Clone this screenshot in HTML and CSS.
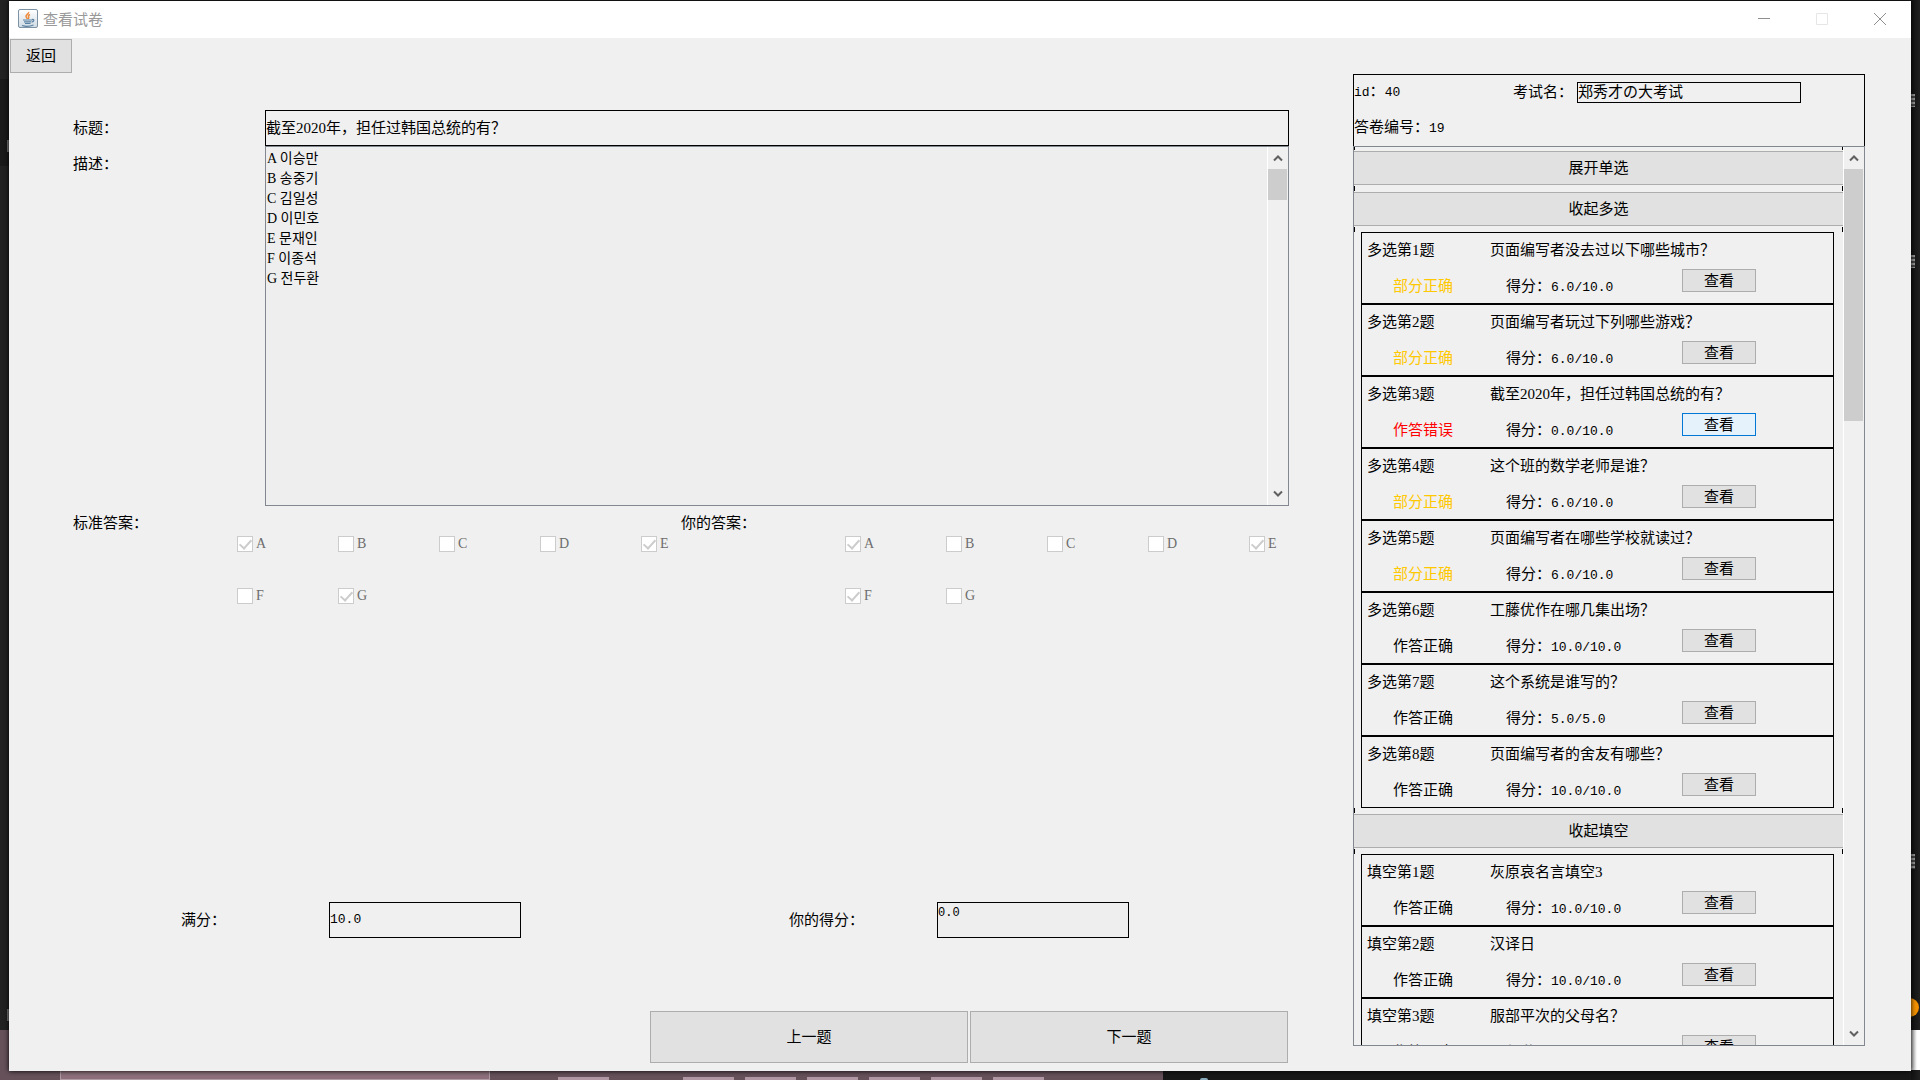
FILE: index.html
```html
<!DOCTYPE html>
<html lang="zh-CN">
<head>
<meta charset="utf-8">
<title>查看试卷</title>
<link rel="stylesheet" href="styles.css">
</head>
<body>
<div class="desktop" aria-hidden="true">
  <div class="side-left"><i class="mark mark-a"></i><i class="mark mark-b"></i></div>
  <div class="side-right"><i class="glyph glyph-a"></i><i class="glyph glyph-b"></i><i class="glyph glyph-c"></i><i class="dot"></i><i class="sheet"></i></div>
  <div class="taskbar">
    <span class="search"></span>
    <div class="tasks"><i></i><i></i><i></i><i></i><i></i><i></i><i></i></div>
    <span class="tray"></span>
  </div>
</div>
<div class="window">
  <header class="titlebar">
    <svg class="java" viewBox="0 0 20 20" width="20" height="20" aria-hidden="true">
      <defs><linearGradient id="tile" x1="0" y1="0" x2="0" y2="1"><stop offset="0" stop-color="#fff"/><stop offset="1" stop-color="#cfdbe4"/></linearGradient></defs>
      <rect x=".5" y=".5" width="19" height="18" rx="1.5" fill="url(#tile)" stroke="#7d92a5"/>
      <path d="M10.5 3c1 1.5-3 2.700-2.500 4.500.2.900 1.300 1.300 1.200 2.500M12 5.500c-1.600.8-2 1.500-1.300 2.500.4.800 0 1.300-.6 2" fill="none" stroke="#ee8a3c" stroke-width="1.500"/>
      <path d="M5 11h9.500M6 12.800h7M7 14.500h5.500M4 16.500c3 1 8.500.8 11.500-.5M14 10.500c2.500-.6 2.500 2-.5 2.700" fill="none" stroke="#5b82a3" stroke-width="1.200"/>
    </svg>
    <h1 class="caption">查看试卷</h1>
    <div class="controls">
      <button type="button" aria-label="最小化"><svg width="12" height="12" viewBox="0 0 12 12"><path d="M0 5.500h12" stroke="#8f8f8f"/></svg></button>
      <button type="button" aria-label="最大化" disabled><svg width="12" height="12" viewBox="0 0 12 12"><path d="M.5.500h11v11H.5z" fill="none" stroke="#e6e6e6"/></svg></button>
      <button type="button" aria-label="关闭"><svg width="12" height="12" viewBox="0 0 12 12"><path d="M0 0l12 12M12 0L0 12" stroke="#8f8f8f"/></svg></button>
    </div>
  </header>
  <div class="toolbar"><button type="button" class="btn back">返回</button></div>
  <div class="content">
    <main class="detail">
      <div class="question">
        <label for="title">标题：</label>
        <input id="title" class="field" type="text" readonly value="截至2020年，担任过韩国总统的有？">
        <label for="desc">描述：</label>
        <div class="pane desc">
          <textarea id="desc" readonly>A 이승만
B 송중기
C 김일성
D 이민호
E 문재인
F 이종석
G 전두환</textarea>
          <div class="scrollbar"><svg class="arrow" viewBox="0 0 10 8"><path d="M1 6.500l4-4 4 4"/></svg><div class="track"><div class="thumb" style="height:10%"></div></div><svg class="arrow" viewBox="0 0 10 8"><path d="M1 1.500l4 4 4-4"/></svg></div>
        </div>
      </div>
      <div class="halves answers">
        <fieldset>
          <legend>标准答案：</legend>
          <div class="options">
            <label><input type="checkbox" checked disabled>A</label>
            <label><input type="checkbox" disabled>B</label>
            <label><input type="checkbox" disabled>C</label>
            <label><input type="checkbox" disabled>D</label>
            <label><input type="checkbox" checked disabled>E</label>
            <label><input type="checkbox" disabled>F</label>
            <label><input type="checkbox" checked disabled>G</label>
          </div>
        </fieldset>
        <fieldset>
          <legend>你的答案：</legend>
          <div class="options">
            <label><input type="checkbox" checked disabled>A</label>
            <label><input type="checkbox" disabled>B</label>
            <label><input type="checkbox" disabled>C</label>
            <label><input type="checkbox" disabled>D</label>
            <label><input type="checkbox" checked disabled>E</label>
            <label><input type="checkbox" checked disabled>F</label>
            <label><input type="checkbox" disabled>G</label>
          </div>
        </fieldset>
      </div>
      <div class="halves scores">
        <div class="score"><label for="full">满分：</label><input id="full" class="field mono" type="text" readonly value="10.0"></div>
        <div class="score"><label for="own">你的得分：</label><textarea id="own" class="field own" readonly>0.0</textarea></div>
      </div>
      <div class="nav"><button type="button" class="btn">上一题</button><button type="button" class="btn">下一题</button></div>
    </main>
    <aside class="side">
      <div class="info">
        <div class="info-row"><span class="exam-id"><span class="mono">id</span>：<span class="mono">40</span></span><label for="exam">考试名：</label><input id="exam" class="field exam" type="text" readonly value="郑秀才の大考试"></div>
        <div class="info-row"><span>答卷编号：<span class="mono">19</span></span></div>
      </div>
      <div class="pane list">
        <div class="items">
          <div class="tick"></div>
          <button type="button" class="btn group">展开单选</button>
          <div class="tick"></div>
          <button type="button" class="btn group">收起多选</button>
          <div class="tick"></div>
          <section class="cards">
            <article class="card"><span>多选第1题</span><span class="stem">页面编写者没去过以下哪些城市？</span><span class="status partial">部分正确</span><span class="points">得分：<span class="mono">6.0/10.0</span></span><button type="button" class="btn view">查看</button></article>
            <article class="card"><span>多选第2题</span><span class="stem">页面编写者玩过下列哪些游戏？</span><span class="status partial">部分正确</span><span class="points">得分：<span class="mono">6.0/10.0</span></span><button type="button" class="btn view">查看</button></article>
            <article class="card"><span>多选第3题</span><span class="stem">截至2020年，担任过韩国总统的有？</span><span class="status wrong">作答错误</span><span class="points">得分：<span class="mono">0.0/10.0</span></span><button type="button" class="btn view active">查看</button></article>
            <article class="card"><span>多选第4题</span><span class="stem">这个班的数学老师是谁？</span><span class="status partial">部分正确</span><span class="points">得分：<span class="mono">6.0/10.0</span></span><button type="button" class="btn view">查看</button></article>
            <article class="card"><span>多选第5题</span><span class="stem">页面编写者在哪些学校就读过？</span><span class="status partial">部分正确</span><span class="points">得分：<span class="mono">6.0/10.0</span></span><button type="button" class="btn view">查看</button></article>
            <article class="card"><span>多选第6题</span><span class="stem">工藤优作在哪几集出场？</span><span class="status">作答正确</span><span class="points">得分：<span class="mono">10.0/10.0</span></span><button type="button" class="btn view">查看</button></article>
            <article class="card"><span>多选第7题</span><span class="stem">这个系统是谁写的？</span><span class="status">作答正确</span><span class="points">得分：<span class="mono">5.0/5.0</span></span><button type="button" class="btn view">查看</button></article>
            <article class="card"><span>多选第8题</span><span class="stem">页面编写者的舍友有哪些？</span><span class="status">作答正确</span><span class="points">得分：<span class="mono">10.0/10.0</span></span><button type="button" class="btn view">查看</button></article>
          </section>
          <div class="tick"></div>
          <button type="button" class="btn group">收起填空</button>
          <div class="tick"></div>
          <section class="cards">
            <article class="card"><span>填空第1题</span><span class="stem">灰原哀名言填空3</span><span class="status">作答正确</span><span class="points">得分：<span class="mono">10.0/10.0</span></span><button type="button" class="btn view">查看</button></article>
            <article class="card"><span>填空第2题</span><span class="stem">汉译日</span><span class="status">作答正确</span><span class="points">得分：<span class="mono">10.0/10.0</span></span><button type="button" class="btn view">查看</button></article>
            <article class="card"><span>填空第3题</span><span class="stem">服部平次的父母名？</span><span class="status">作答正确</span><span class="points">得分：<span class="mono">10.0/10.0</span></span><button type="button" class="btn view">查看</button></article>
          </section>
        </div>
        <div class="scrollbar"><svg class="arrow" viewBox="0 0 10 8"><path d="M1 6.500l4-4 4 4"/></svg><div class="track"><div class="thumb" style="height:29.5%"></div></div><svg class="arrow" viewBox="0 0 10 8"><path d="M1 1.500l4 4 4-4"/></svg></div>
      </div>
    </aside>
  </div>
</div>
</body>
</html>
```
FILE: styles.css
```css
* { box-sizing: border-box; }

body {
  margin: 0;
  height: 100vh;
  min-height: 800px;
  padding: 1px 9px 9px;
  overflow: hidden;
  background: #1e1e1e;
  color: #000;
  font: 15px/20px "Liberation Serif", "Noto Sans CJK SC", "Noto Sans CJK KR", serif;
}

button, input, textarea { font: inherit; color: inherit; margin: 0; border-radius: 0; }

/* Desktop behind the window */
.desktop { position: absolute; inset: 0; overflow: hidden; }
.side-left { position: absolute; left: 0; top: 0; bottom: 50px; width: 9px; background: linear-gradient(#222 0 79px, #1a1a1a 79px 166px, #222 166px); }
.mark { position: absolute; right: 0; width: 2px; height: 12px; background: #777; }
.mark-a { top: 140px; }
.mark-b { bottom: 9px; }
.side-right { position: absolute; right: 0; top: 0; bottom: 0; width: 9px; background: linear-gradient(90deg, #111, #202020); }
.glyph { position: absolute; left: 0; width: 4px; height: 13px; background: repeating-linear-gradient(#999 0 2px, #444 2px 4px); }
.glyph-a { top: 94px; }
.glyph-b { top: 255px; }
.glyph-c { top: 854px; height: 15px; }
.dot { position: absolute; right: 1px; bottom: 63px; width: 19px; height: 19px; border-radius: 50%; background: #f29100; }
.sheet { position: absolute; inset: auto 0 10px 0; height: 40px; background: linear-gradient(90deg, #aaa, #fff 6px); }
.taskbar { position: absolute; left: 0; right: 9px; bottom: 0; height: 50px; display: flex; align-items: flex-end; background: linear-gradient(90deg, #66515b 0 1163px, #181818 1163px); }
.search { flex: none; width: 430px; height: 100%; margin-left: 60px; background: #8d707b; border: 1px solid #b09aa3; }
.tasks { display: flex; gap: 11px; margin-left: 68px; }
.tasks i { width: 51px; height: 3px; background: #b197a3; }
.tasks i:first-child { margin-right: 63px; }
.tray { width: 8px; height: 2px; margin-left: 156px; border-radius: 4px 4px 0 0; background: #8ab; }

/* Window */
.window { position: relative; height: 100%; display: flex; flex-direction: column; background: #f0f0f0; box-shadow: 0 0 5px #000; }
.titlebar { flex: none; height: 37px; display: flex; align-items: center; padding: 0 2px 2px 9px; background: #fff; color: #999; }
.caption { margin: 0 0 0 5px; font: 15px/20px "Noto Sans CJK SC", sans-serif; }
.controls { display: flex; margin-left: auto; }
.controls button { width: 58px; height: 34px; display: flex; align-items: center; justify-content: center; padding: 0; border: 0; background: none; }
.toolbar { flex: none; padding: 1px; height: 36px; }
.btn { padding: 0; border: 1px solid #adadad; background: #e1e1e1; text-align: center; }
.back { width: 62px; height: 34px; }
.content { flex: 1; min-height: 0; display: grid; grid-template-columns: minmax(0, 1fr) 512px; gap: 64px; padding-right: 46px; }

/* Question detail */
.detail { display: flex; flex-direction: column; padding: 36px 0 8px 64px; }
.question { display: grid; grid-template-columns: 192px 1fr; grid-template-rows: 36px 360px; line-height: 36px; }
.field { border: 1px solid #000; padding: 0; background: #f0f0f0; outline: 0; resize: none; min-width: 0; }
.mono { font-family: "Liberation Mono", monospace; font-size: 13px; }
.pane { display: flex; min-height: 0; border: 1px solid #828790; }
.desc { background: #eee; }
.desc textarea { flex: 1; padding: 2px 1px; border: 0; outline: 0; resize: none; overflow: hidden; background: none; font: 14px/20px "Liberation Serif", "Noto Sans CJK KR", serif; }
.scrollbar { flex: none; width: 21px; display: flex; flex-direction: column; border-left: 1px solid #fff; border-right: 1px solid #f0f0f0; background: #f0f0f0; }
.arrow { flex: none; width: 10px; height: 8px; margin: 7px auto; fill: none; stroke: #606060; stroke-width: 2; }
.track { flex: 1; }
.thumb { background: #cdcdcd; }
.halves { display: grid; grid-template-columns: 1fr 1fr; }
.answers { margin-top: 7px; }
fieldset { margin: 0; padding: 0; border: 0; min-width: 0; }
legend { padding: 0; line-height: 20px; }
.options { display: grid; grid-template-columns: repeat(5, 101px); row-gap: 32px; margin: 1px 0 0 164px; width: 444px; }
.options label { display: flex; align-items: center; gap: 3px; height: 20px; color: #6d6d6d; font-size: 14px; }
.options input { appearance: none; width: 16px; height: 16px; border: 1px solid #ccc; background: #fff; display: grid; place-items: center; }
.options input:checked::before { content: ""; width: 5px; height: 10px; margin-bottom: 3px; border: solid #ccc; border-width: 0 2px 2px 0; transform: rotate(42deg); }
.scores { margin-top: auto; }
.score { display: grid; grid-template-columns: 148px 192px; padding-left: 108px; line-height: 36px; }
.score .field { height: 36px; }
.own { overflow: hidden; background: #eee; font: 12px/20px "Liberation Mono", monospace; }
.nav { display: flex; gap: 2px; justify-content: flex-end; margin-top: 73px; padding-right: 1px; }
.nav .btn { width: 318px; height: 52px; }

/* Paper overview */
.side { display: flex; flex-direction: column; min-height: 0; padding-bottom: 25px; }
.info { flex: none; height: 72px; border: 1px solid #000; border-bottom: 0; }
.info-row { display: flex; align-items: center; height: 36px; line-height: 20px; padding-bottom: 2px; }
.exam-id { width: 159px; }
.exam { width: 224px; height: 21px; margin-left: 4px; padding-bottom: 4px; line-height: 15px; }
.list { flex: 1; }
.items { flex: 1; overflow: hidden; }
.tick { height: 5px; margin: 1px 0; border: solid #000; border-width: 0 1px; }
.tick:first-child { height: 3px; margin-top: 0; }
.group { display: block; width: 100%; height: 34px; border-width: 1px 0; }
.cards { margin: -1px 9px 0 7px; }
.cards + .tick { margin-top: 0; }
.card { display: grid; grid-template-columns: 123px 192px 74px; grid-template-rows: 34px 36px; height: 72px; padding-left: 5px; border: 1px solid #000; line-height: 34px; }
.stem { grid-column: 2 / 4; }
.status { padding-left: 26px; line-height: 38px; }
.points { padding-left: 16px; line-height: 38px; }
.partial { color: #ffc800; }
.wrong { color: #f00; }
.view { height: 23px; margin-top: 2px; line-height: 18px; }
.active { border-color: #0078d7; background: #e5f1fb; }
```
